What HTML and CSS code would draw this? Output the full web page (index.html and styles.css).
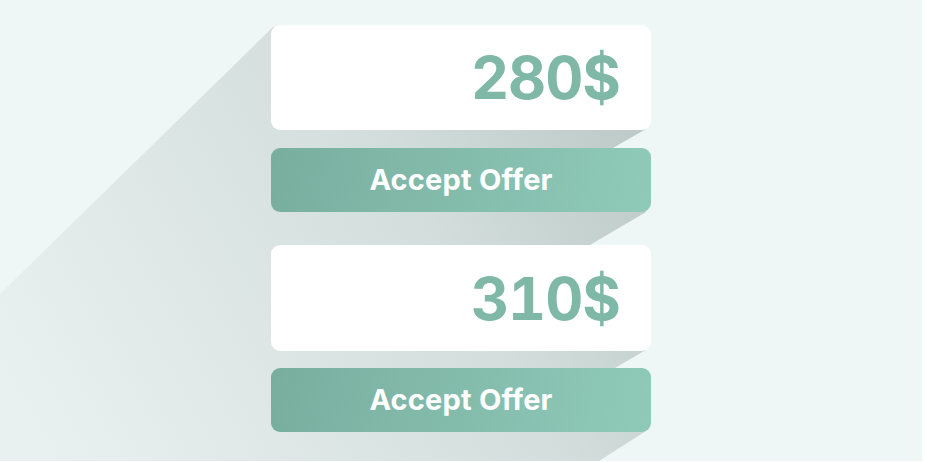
FILE: index.html
```html
<!DOCTYPE html>
<html>
<head>
<meta charset="utf-8">
<link rel="stylesheet" href="styles.css">
</head>
<body>
<div class="scene">
  <svg class="shadow" width="922" height="461" viewBox="0 0 922 461">
    <defs>
      <linearGradient id="sg" gradientUnits="userSpaceOnUse" x1="650" y1="120" x2="60" y2="470">
        <stop offset="0" stop-color="#bcc9c7"/>
        <stop offset="0.35" stop-color="#d2dddc"/>
        <stop offset="1" stop-color="#e9f1f0"/>
      </linearGradient>
    </defs>
    <polygon fill="url(#sg)" points="273,27 0,294 0,461 599,461 646,431 615,368 646,350 590,245 646,212 613,148 646,129 646,27"/>
  </svg>
  <div class="stack">
    <div class="price-card"><span class="price">280$</span></div>
    <button class="accept">Accept Offer</button>
    <div class="price-card second"><span class="price">310$</span></div>
    <button class="accept">Accept Offer</button>
  </div>
</div>
</body>
</html>
```
FILE: styles.css
```css
html, body {
  margin: 0;
  padding: 0;
  background: #ffffff;
}
.scene {
  position: relative;
  width: 922px;
  height: 461px;
  background: #eef7f6;
  overflow: hidden;
}
.shadow {
  position: absolute;
  left: 0;
  top: 0;
}
.stack {
  position: relative;
  display: flex;
  flex-direction: column;
  align-items: center;
  padding-top: 25px;
}
.price-card {
  width: 380px;
  height: 105px;
  box-sizing: border-box;
  background: #ffffff;
  border-radius: 9px;
  display: flex;
  align-items: center;
  justify-content: flex-end;
  padding-right: 31px;
}
.price-card.second {
  height: 106px;
  margin-top: 33px;
}
.price {
  font-family: Inter, "Noto Sans", sans-serif;
  font-weight: 700;
  font-size: 59px;
  color: #80b8a7;
  letter-spacing: -1px;
  line-height: 1;
  font-variant-numeric: tabular-nums;
}
.accept {
  width: 380px;
  height: 64px;
  margin-top: 18px;
  border: 0;
  border-radius: 9px;
  background: linear-gradient(100deg, #79ae9f 0%, #8fcab9 100%);
  color: #ffffff;
  font-family: Inter, "Noto Sans", sans-serif;
  font-weight: 700;
  font-size: 29px;
  letter-spacing: 0.2px;
  padding: 0 0 2px;
  display: flex;
  align-items: center;
  justify-content: center;
}
.price-card.second + .accept {
  margin-top: 17px;
}
```
